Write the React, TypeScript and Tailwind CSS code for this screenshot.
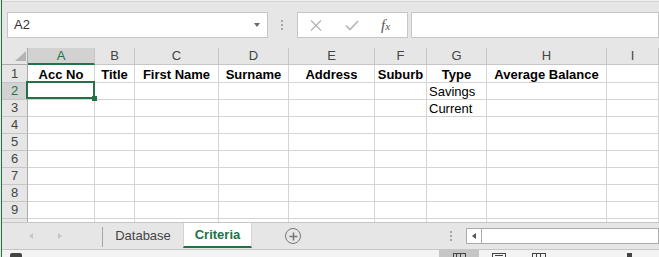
import { Fragment } from "react";

const columns = ["A", "B", "C", "D", "E", "F", "G", "H", "I"];

const headerRow = [
  "Acc No",
  "Title",
  "First Name",
  "Surname",
  "Address",
  "Suburb",
  "Type",
  "Average Balance",
  "",
];

// criteria values live in column G (index 6)
const typeValues: Record<number, string> = { 2: "Savings", 3: "Current" };

const rows = [1, 2, 3, 4, 5, 6, 7, 8, 9, 10];

function FormulaBar() {
  return (
    <div className="flex h-[46px] items-start pt-[10px]">
      <div className="ml-[5px] flex h-[26px] w-[261px] items-center justify-between border border-[#c6c6c6] bg-white pl-[6px] pr-[7px]">
        <span className="text-[13px] text-[#333]">A2</span>
        <span className="h-0 w-0 border-x-[3.5px] border-t-[4px] border-x-transparent border-t-[#6a6a6a]" />
      </div>
      <div className="ml-[13px] flex h-[26px] flex-col items-center justify-center gap-[2px]">
        <span className="h-[2px] w-[2px] bg-[#a6a6a6]" />
        <span className="h-[2px] w-[2px] bg-[#a6a6a6]" />
        <span className="h-[2px] w-[2px] bg-[#a6a6a6]" />
      </div>
      <div className="ml-[14px] flex h-[26px] w-[111px] items-center border border-[#c6c6c6] bg-white">
        <svg className="ml-[12px]" width="12" height="11" viewBox="0 0 12 11">
          <path d="M1 0.5 L11 10.5 M11 0.5 L1 10.5" stroke="#b5b5b5" strokeWidth="1.3" fill="none" />
        </svg>
        <svg className="ml-[23px]" width="14" height="11" viewBox="0 0 14 11">
          <path d="M1 5.5 L5 9.5 L13 1" stroke="#b5b5b5" strokeWidth="1.6" fill="none" />
        </svg>
        <span className="ml-[22px] font-['Liberation_Serif'] text-[15px] italic text-[#555]">
          f<span className="text-[11px]">x</span>
        </span>
      </div>
      <div className="ml-[3px] h-[26px] flex-1 border border-[#c6c6c6] bg-white" />
    </div>
  );
}

function Sheet() {
  return (
    <div className="h-[174px] overflow-hidden bg-white">
      <div className="grid grid-cols-[26px_67px_40px_84px_70px_86px_52px_60px_120px_1fr] font-['Liberation_Sans',sans-serif]">
        <div className="relative h-[17px] border-b border-r border-[#ababab] bg-[#e6e6e6]">
          <svg className="absolute left-[13px] top-[3px]" width="11" height="10" viewBox="0 0 11 10">
            <path d="M11 0 L11 10 L0 10 Z" fill="#b4b4b4" />
          </svg>
        </div>
        {columns.map((c) =>
          c === "A" ? (
            <div
              key={c}
              className="flex h-[17px] items-center justify-center border-b-2 border-r border-b-[#217346] border-r-[#c6c6c6] bg-[#d2d2d2] text-[13px] text-[#217346]"
            >
              {c}
            </div>
          ) : (
            <div
              key={c}
              className="flex h-[17px] items-center justify-center border-b border-r border-[#c6c6c6] bg-[#e6e6e6] text-[13px] text-[#444]"
            >
              {c}
            </div>
          ),
        )}

        {rows.map((r) => (
          <Fragment key={r}>
            <div
              className={
                r === 2
                  ? "flex items-center justify-center border-b border-r border-b-[#c6c6c6] border-r-[#ababab] bg-[#d2d2d2] text-[13px] text-[#217346]"
                  : "flex items-center justify-center border-b border-r border-b-[#c6c6c6] border-r-[#ababab] bg-[#e6e6e6] text-[13px] text-[#444]"
              }
              style={{ height: r === 1 ? 18 : 17 }}
            >
              {r}
            </div>
            {columns.map((c, i) => {
              const selected = r === 2 && c === "A";
              let content = "";
              if (r === 1) content = headerRow[i];
              else if (i === 6 && typeValues[r]) content = typeValues[r];
              return (
                <div
                  key={c}
                  className={
                    r === 1
                      ? "relative flex items-end justify-center border-b border-r border-[#d4d4d4] text-[13px] font-bold leading-[14px] text-black"
                      : "relative flex items-end border-b border-r border-[#d4d4d4] pl-[2px] text-[13px] leading-[14px] text-black"
                  }
                >
                  {content}
                  {selected && (
                    <>
                      <div className="absolute -left-[2px] -right-[1px] -top-[2px] bottom-0 z-10 border-2 border-[#217346]" />
                      <div className="absolute left-[64px] top-[13px] z-20 h-[5px] w-[5px] bg-[#217346]" />
                    </>
                  )}
                </div>
              );
            })}
          </Fragment>
        ))}
      </div>
    </div>
  );
}

function TabBar() {
  return (
    <div className="flex h-[28px] items-start border-y border-[#c6c6c6] bg-[#e6e6e6] font-['Liberation_Sans',sans-serif]">
      <div className="flex h-[26px] w-[100px] items-center gap-[25px] pl-[27px]">
        <span className="h-0 w-0 border-y-[3.5px] border-r-[4px] border-y-transparent border-r-[#c6c6c6]" />
        <span className="h-0 w-0 border-y-[3.5px] border-l-[4px] border-y-transparent border-l-[#c6c6c6]" />
      </div>
      <div className="mt-[4px] h-[20px] w-px bg-[#a6a6a6]" />
      <div className="flex h-[26px] w-[80px] items-center justify-center text-[13px] text-[#444]">
        Database
      </div>
      <div className="flex h-[25px] w-[69px] items-center justify-center border-x border-b-2 border-x-[#d4d4d4] border-b-[#217346] bg-white text-[13px] font-bold text-[#217346]">
        Criteria
      </div>
      <div className="ml-[33px] mt-[5px] flex h-[16px] w-[16px] items-center justify-center rounded-full border-[1.5px] border-[#777]">
        <svg width="9" height="9" viewBox="0 0 9 9">
          <path d="M4.5 0.5 V8.5 M0.5 4.5 H8.5" stroke="#777" strokeWidth="1.5" />
        </svg>
      </div>
      <div className="ml-[149px] mt-[8px] flex flex-col gap-[2px]">
        <span className="h-[2px] w-[2px] bg-[#a6a6a6]" />
        <span className="h-[2px] w-[2px] bg-[#a6a6a6]" />
        <span className="h-[2px] w-[2px] bg-[#a6a6a6]" />
      </div>
      <div className="ml-[14px] mt-[5px] flex h-[16px] flex-1 border border-[#ababab] bg-white">
        <div className="flex w-[15px] items-center justify-center border-r border-[#ababab]">
          <span className="h-0 w-0 border-y-[3.5px] border-r-[4px] border-y-transparent border-r-[#555]" />
        </div>
      </div>
    </div>
  );
}

function StatusBar() {
  return (
    <div className="flex h-[7px] items-start overflow-hidden bg-[#f3f3f3]">
      <div className="ml-[8px] mt-[3px] h-[6px] w-[12px] rounded-t-[2px] bg-[#444]" />
      <div className="ml-[417px] flex h-[7px] w-[40px] justify-center bg-[#c6c6c6]">
        <div className="mt-[3px] flex h-[6px] w-[13px] border border-[#444]">
          <span className="w-1/3 border-r border-[#444]" />
          <span className="w-1/3 border-r border-[#444]" />
        </div>
      </div>
      <div className="ml-[13px] mt-[3px] h-[6px] w-[14px] border border-[#444]">
        <div className="mx-[2px] mt-[1px] h-px bg-[#444]" />
      </div>
      <div className="ml-[26px] mt-[3px] flex h-[6px] w-[14px] border border-[#444]">
        <span className="w-1/3 border-r border-[#444]" />
        <span className="w-1/3 border-r border-[#444]" />
      </div>
      <div className="ml-[81px] mt-[3px] h-[5px] w-[5px] bg-[#444]" />
    </div>
  );
}

export default function App() {
  return (
    <div className="flex h-[257px] w-[659px] overflow-hidden bg-[#e6e6e6] font-['Liberation_Sans',sans-serif]">
      <div className="w-px bg-[#e6e6e6]" />
      <div className="w-px bg-[#217346]" />
      <div className="flex min-w-0 flex-1 flex-col">
        <div className="h-[2px] border-b border-[#d4d4d4] bg-[#f0f0f0]" />
        <FormulaBar />
        <Sheet />
        <TabBar />
        <StatusBar />
      </div>
    </div>
  );
}
